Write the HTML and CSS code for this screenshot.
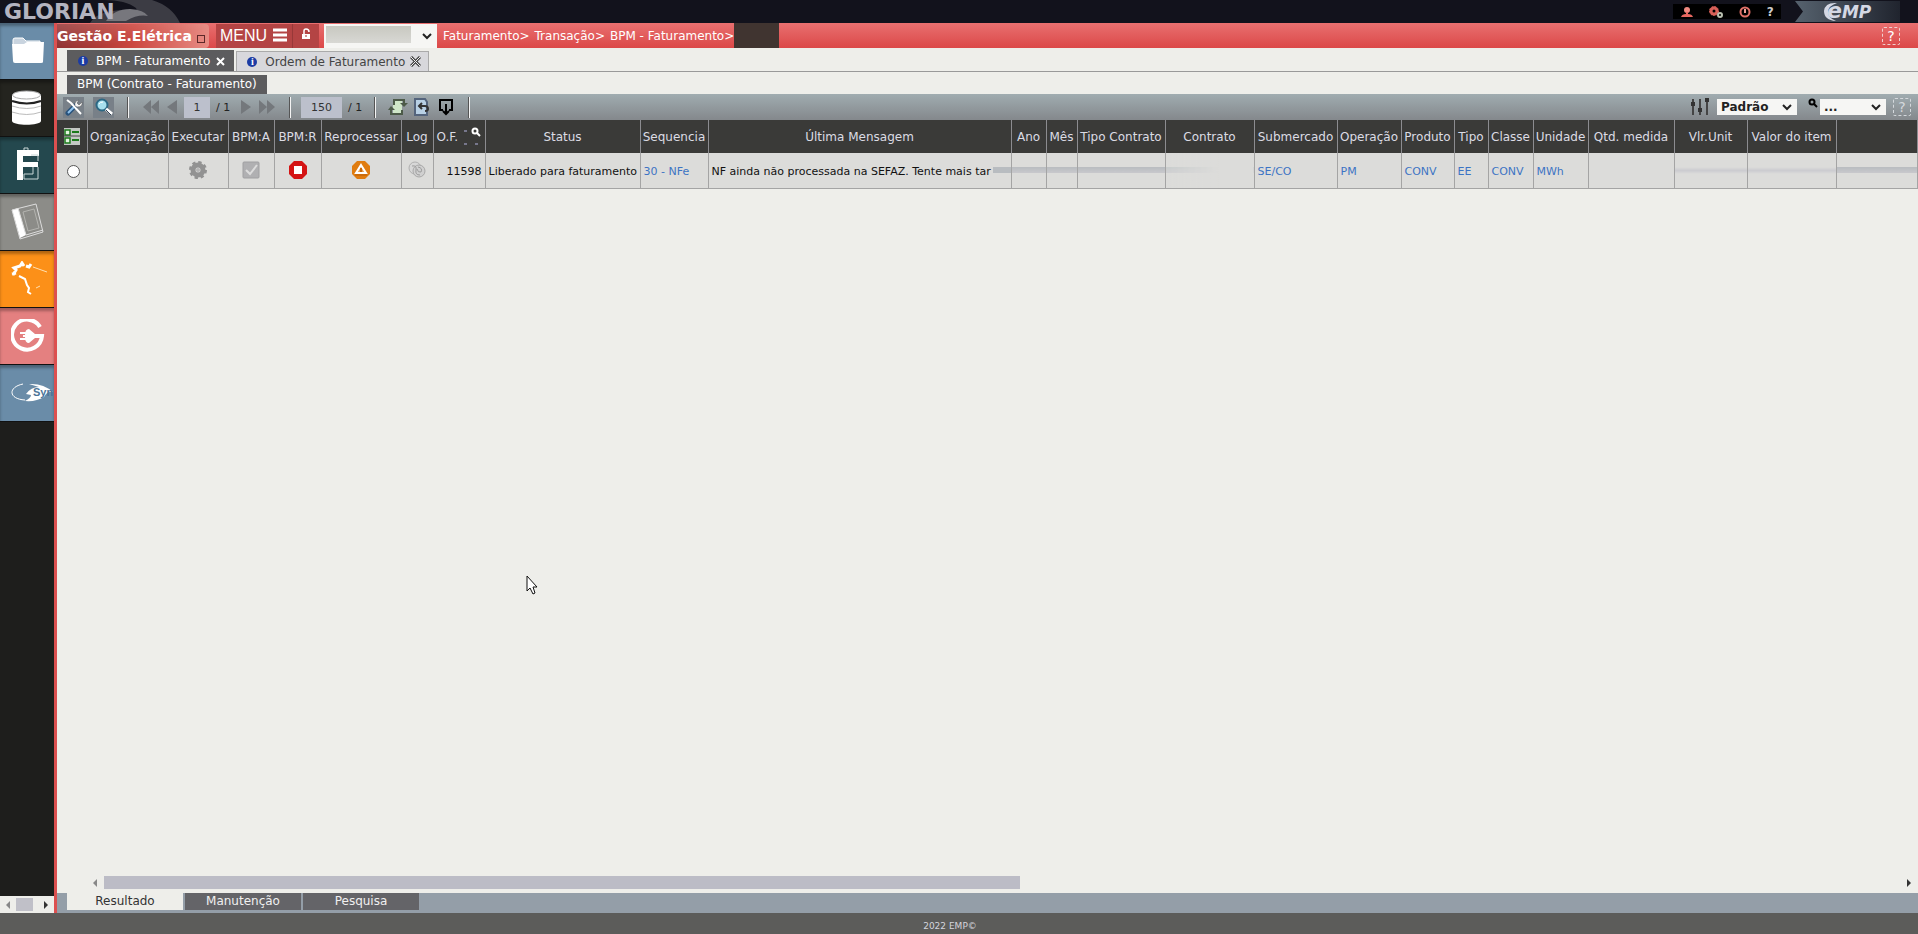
FILE: index.html
```html
<!DOCTYPE html>
<html lang="pt-BR">
<head>
  <meta charset="UTF-8">
  <meta name="viewport" content="width=device-width, initial-scale=1.0">
  <title>Glorian - BPM Faturamento</title>
  <link rel="stylesheet" href="styles.css">
</head>
<body>
  <header class="topbar">
    <svg class="topbar-swoosh" width="90" height="23" viewBox="0 0 90 23">
      <path d="M14 0H62Q82 6 90 23H0Q6 12 30 10Q50 14 46 8Q36 0 14 0Z" fill="#3c3c44"/>
      <path d="M16 21Q24 9 40 9Q54 10 58 16Q48 14 36 21Z" fill="#77777d"/>
    </svg>
    <span class="brand">GLORIAN</span>
    <nav class="user-icons">
      <a href="#" aria-label="Usuário"><svg width="14" height="12" viewBox="0 0 14 12"><circle cx="7" cy="4" r="3" fill="#f08a80"/><path d="M1 11Q2 8 6 8V6H8V8Q12 8 13 11Z" fill="#e86860"/></svg></a>
      <a href="#" aria-label="Configurações"><svg width="14" height="12" viewBox="0 0 14 12"><circle cx="5" cy="5" r="3" fill="none" stroke="#d86058" stroke-width="3"/><circle cx="5" cy="5" r="4.5" fill="none" stroke="#d86058" stroke-dasharray="2 1"/><circle cx="11" cy="9" r="2" fill="none" stroke="#b9c0b0" stroke-width="2"/></svg></a>
      <a href="#" aria-label="Sair"><svg width="14" height="12" viewBox="0 0 14 12"><circle cx="7" cy="6" r="4.5" fill="none" stroke="#e07068" stroke-width="2"/><path d="M7 3V7" stroke="#f0a098" stroke-width="2"/></svg></a>
      <a href="#" aria-label="Ajuda">?</a>
    </nav>
    <div class="company">
      <svg class="company-arc" width="20" height="20" viewBox="0 0 20 20"><path d="M15 1Q3 0 2 9Q2 18 14 19Q6 16 6 10Q6 4 15 1Z" fill="#d4d8e4"/></svg>
      <span class="company-e">e</span>MP
    </div>
  </header>

  <div class="layout">
    <aside class="sidebar">
      <a href="#" class="tile blue" aria-label="Pastas"><svg width="34" height="30" viewBox="0 0 34 30"><path d="M2 9V4Q2 2 4 2H12L15 5H29V9" fill="#c9d4df" stroke="#fff"/><path d="M1 8H13L16 6H33L32 26Q32 27 30 27H4Q2 27 2 25Z" fill="#fff"/></svg></a>
      <a href="#" class="tile black" aria-label="Banco de dados"><svg width="34" height="36" viewBox="0 0 34 36"><path d="M1 5V31C2 36 29 36 30 31V5Z" fill="#fff"/><ellipse cx="15.500" cy="5" rx="14" ry="4" fill="#fff" stroke="#aaa"/><path d="M1 11Q16 16 30 11" fill="none" stroke="#222" stroke-width="2"/><path d="M1 16Q16 21 30 16M1 22Q16 27 30 22" fill="none" stroke="#bbb"/></svg></a>
      <a href="#" class="tile teal" aria-label="Estrutura"><svg width="34" height="36" viewBox="0 0 34 36"><path d="M6 3H28V9H12V15H27V20H12V33H6Z" fill="#fff"/><path d="M13 3V1H17V3M20 8H27V14M27 20V32H13V27H22V20" fill="none" stroke="#c9d6d6"/></svg></a>
      <a href="#" class="tile gray" aria-label="Manual"><svg width="34" height="38" viewBox="0 0 34 38"><path d="M1 7L7 5L15 32L9 35Z" fill="#fff"/><path d="M1 7L25 1L32 29L9 36ZM7 5L15 32L32 27" fill="none" stroke="#ddd"/><path d="M12 9L23 6L28 25L17 28Z" fill="none" stroke="#b4b4b0"/></svg></a>
      <a href="#" class="tile orange" aria-label="Mapa"><svg width="36" height="36" viewBox="0 0 36 36"><path d="M2 14L5 9L3 7L9 5L11 2L13 5M15 5L18 6L20 3M1 13L5 12" fill="none" stroke="#fff" stroke-width="3"/><path d="M8 15L14 18L16 24L18 27L17 31L20 33" fill="none" stroke="#fff" stroke-width="2"/><path d="M22 6L36 11M25 27L29 25" fill="none" stroke="#ffe0b0"/></svg></a>
      <a href="#" class="tile pink" aria-label="Energia"><svg width="34" height="34" viewBox="0 0 34 34"><path d="M29 8A15 15 0 1 0 31 17H24" fill="none" stroke="#fff" stroke-width="4"/><path d="M12 16H14Q14 10 18 10L24 15V19L18 24Q14 24 14 18H12Z" fill="#fff"/><path d="M9 14H16M9 20H16" stroke="#fff" stroke-width="2"/></svg></a>
      <a href="#" class="tile blue sync" aria-label="Sync"><svg width="44" height="22" viewBox="0 0 44 22"><path d="M12 2C-3 5-3 17 14 18" fill="none" stroke="#fff"/><path d="M18 2Q32 1 42 10Q36 9 33 15Q25 20 14 19Q20 16 20 13L15 12Q20 5 28 5Z" fill="#fff"/></svg><span>Syn</span></a>
      <div class="side-scroll">
        <span class="arrow left dim"></span><span class="side-thumb"></span><span class="arrow right"></span>
      </div>
    </aside>

    <main class="content">
      <div class="module-bar">
        <div class="module">Gestão E.Elétrica <button type="button" class="restore" aria-label="Fechar módulo"></button></div>
        <button type="button" class="menu-btn">MENU
          <svg width="16" height="15" viewBox="0 0 16 15"><path d="M1 2H15M1 7H15M1 12H15" stroke="#fff" stroke-width="3"/></svg>
        </button>
        <button type="button" class="lock-btn" aria-label="Bloquear"><svg width="10" height="12" viewBox="0 0 10 12"><path d="M3 6V3Q3 1 5 1Q8 1 8 4" fill="none" stroke="#fff" stroke-width="1.5"/><path d="M1 6H9V11H1Z" fill="#fff"/><path d="M5 7V9" stroke="#a33"/></svg></button>
        <div class="select-box company-select">
          <select aria-label="Empresa"><option></option></select>
          <span class="masked"></span>
          <svg width="10" height="7" viewBox="0 0 10 7"><path d="M1 1L5 5L9 1" fill="none" stroke="#222" stroke-width="2"/></svg>
        </div>
        <nav class="breadcrumb"><a href="#">Faturamento&gt;</a> <a href="#">Transação&gt;</a> <a href="#">BPM - Faturamento&gt;</a></nav>
        <span class="crumb-end"></span>
        <button type="button" class="help">?</button>
      </div>

      <nav class="tabs">
        <a href="#" class="tab active"><i class="info">i</i>BPM - Faturamento <svg width="11" height="11" viewBox="0 0 11 11"><path d="M2 2L9 9M9 2L2 9" stroke="#fff" stroke-width="2"/></svg></a>
        <a href="#" class="tab"><i class="info">i</i>Ordem de Faturamento <svg width="11" height="11" viewBox="0 0 11 11"><path d="M1 1L10 10M10 1L1 10" stroke="#444" stroke-width="3"/><path d="M1 1L10 10M10 1L1 10" stroke="#eee"/></svg></a>
      </nav>
      <div class="subtabs"><a href="#" class="subtab">BPM (Contrato - Faturamento)</a></div>

      <div class="toolbar">
        <button type="button" class="tool boxed" aria-label="Ferramentas"><svg width="18" height="18" viewBox="0 0 18 18"><path d="M3 15L10 8" stroke="#28527c" stroke-width="5" stroke-linecap="round"/><path d="M3 15L9 9" stroke="#8fc2ec" stroke-width="2"/><path d="M2 2L6 5L16 16" fill="none" stroke="#fff" stroke-width="2"/><path d="M10 8Q9 3 14 2L12 5L14 7L17 4Q18 9 12 9Z" fill="#f4f4f4" stroke="#555" stroke-width=".5"/></svg></button>
        <button type="button" class="tool boxed" aria-label="Pesquisar"><svg width="20" height="18" viewBox="0 0 20 18"><circle cx="8" cy="7" r="5.500" fill="#a8e0ee" stroke="#2c6884" stroke-width="2"/><path d="M5 6Q6 4 9 4" stroke="#fff" fill="none"/><path d="M12 11L18 16" stroke="#fff" stroke-width="3"/><path d="M12 12L17 17" stroke="#345"/></svg></button>
        <span class="sep"></span>
        <div class="pager">
          <button type="button" class="nav" aria-label="Primeira"><svg width="18" height="16" viewBox="0 0 18 16"><path d="M9 1V15L1 8ZM17 1V15L9 8Z"/></svg></button>
          <button type="button" class="nav" aria-label="Anterior"><svg width="12" height="16" viewBox="0 0 12 16"><path d="M11 1V15L1 8Z"/></svg></button>
          <input class="page" type="text" value="1" aria-label="Página"><span class="total">/ 1</span>
          <button type="button" class="nav" aria-label="Próxima"><svg width="12" height="16" viewBox="0 0 12 16"><path d="M1 1V15L11 8Z"/></svg></button>
          <button type="button" class="nav" aria-label="Última"><svg width="18" height="16" viewBox="0 0 18 16"><path d="M1 1V15L9 8ZM9 1V15L17 8Z"/></svg></button>
        </div>
        <span class="sep"></span>
        <input class="rows" type="text" value="150" aria-label="Linhas"><span class="total">/ 1</span>
        <span class="sep"></span>
        <div class="actions">
          <button type="button" class="tool" aria-label="Atualizar"><svg width="20" height="18" viewBox="0 0 20 18"><path d="M5 2H14V16H5Z" fill="#cfe6c8"/><path d="M16 6V2H6V7M3 10V16H14V12" fill="none" stroke="#4c5a48" stroke-width="2"/><path d="M12 5L16 9L20 5ZM0 12L3 8L7 12Z" fill="#4c5a48"/></svg></button>
          <button type="button" class="tool" aria-label="Voltar"><svg width="18" height="18" viewBox="0 0 18 18"><path d="M2 1H12L14 4V17H2Z" fill="#b8d0e4" stroke="#54647c" stroke-width="2"/><path d="M6 8H12Q15 8 15 11Q15 13 12 13" fill="none" stroke="#333" stroke-width="2"/><path d="M9 5L6 8L9 11" fill="none" stroke="#333" stroke-width="2"/></svg></button>
          <button type="button" class="tool" aria-label="Exportar"><svg width="16" height="18" viewBox="0 0 16 18"><path d="M5 12H2V2H14V12H11M8 6V15M5 13L8 16L11 13" fill="none" stroke="#000" stroke-width="2"/></svg></button>
        </div>
        <span class="sep"></span>
        <div class="view-tools">
          <svg width="20" height="18" viewBox="0 0 20 18"><path d="M3 1V17M10 1V17M17 1V17" stroke="#444" stroke-width="2"/><path d="M1 6H5M8 12H12M15 2H19" stroke="#333" stroke-width="4"/></svg>
          <div class="select-box layout-select">
            <select aria-label="Layout"><option>Padrão</option></select>
            <svg width="10" height="7" viewBox="0 0 10 7"><path d="M1 1L5 5L9 1" fill="none" stroke="#222" stroke-width="2"/></svg>
          </div>
          <svg class="key" width="12" height="18" viewBox="0 0 12 18"><circle cx="5" cy="4" r="2.5" fill="none" stroke="#000" stroke-width="2"/><path d="M7 6L10 9" stroke="#000" stroke-width="2"/></svg>
          <div class="select-box filter-select">
            <select aria-label="Filtro"><option>...</option></select>
            <svg width="10" height="7" viewBox="0 0 10 7"><path d="M1 1L5 5L9 1" fill="none" stroke="#222" stroke-width="2"/></svg>
          </div>
          <button type="button" class="help">?</button>
        </div>
      </div>

      <table class="grid">
        <colgroup>
          <col class="w30"><col class="w81"><col class="w60"><col class="w46"><col class="w47"><col class="w80"><col class="w32"><col class="w52"><col class="w155"><col class="w68"><col class="w303"><col class="w35"><col class="w31"><col class="w88"><col class="w89"><col class="w83"><col class="w64"><col class="w53"><col class="w34"><col class="w45"><col class="w55"><col class="w86"><col class="w73"><col class="w89"><col>
        </colgroup>
        <thead>
          <tr>
            <th><svg width="16" height="17" viewBox="0 0 16 17"><path d="M0 0H16V17H0Z" fill="#c4c8c4"/><path d="M1 2H6V7H1ZM1 10H6V15H1Z" fill="#e4f4e0" stroke="#1c7a1c" stroke-width="1.5"/><path d="M8 4H15M8 12H15" stroke="#1c7a1c" stroke-width="2"/><path d="M0 8H16" stroke="#444"/></svg></th>
            <th>Organização</th>
            <th>Executar</th>
            <th>BPM:A</th>
            <th>BPM:R</th>
            <th>Reprocessar</th>
            <th>Log</th>
            <th class="of"><span>O.F.</span><svg width="17" height="22" viewBox="0 0 17 22"><circle cx="11" cy="5" r="2.5" fill="none" stroke="#fff" stroke-width="2"/><path d="M13 7L16 10" stroke="#fff" stroke-width="2"/><path d="M0 5H3M0 18H3M11 18H14" stroke="#77778c" stroke-width="2"/></svg></th>
            <th>Status</th>
            <th>Sequencia</th>
            <th>Última Mensagem</th>
            <th>Ano</th>
            <th>Mês</th>
            <th>Tipo Contrato</th>
            <th>Contrato</th>
            <th>Submercado</th>
            <th>Operação</th>
            <th>Produto</th>
            <th>Tipo</th>
            <th>Classe</th>
            <th>Unidade</th>
            <th>Qtd. medida</th>
            <th>Vlr.Unit</th>
            <th>Valor do item</th>
            <th></th>
          </tr>
        </thead>
        <tbody>
          <tr>
            <td class="icon select"><input type="radio" name="linha" aria-label="Selecionar linha"></td>
            <td></td>
            <td class="icon"><svg width="18" height="18" viewBox="0 0 18 18"><circle cx="9" cy="9" r="7" fill="none" stroke="#929292" stroke-width="4" stroke-dasharray="3 2.5"/><circle cx="9" cy="9" r="5" fill="none" stroke="#929292" stroke-width="5"/><circle cx="9" cy="9" r="2" fill="#b4b4b4"/></svg></td>
            <td class="icon"><svg width="18" height="18" viewBox="0 0 18 18"><rect x="1" y="1" width="16" height="16" rx="1" fill="#b0b0b2" stroke="#a0a0a2"/><path d="M4 9L8 13L15 4" fill="none" stroke="#dcdcdc" stroke-width="2"/></svg></td>
            <td class="icon"><svg width="18" height="18" viewBox="0 0 18 18"><path d="M5 0H13L18 5V13L13 18H5L0 13V5Z" fill="#d41414"/><path d="M5 5H13V13H5Z" fill="#fff"/></svg></td>
            <td class="icon"><svg width="18" height="18" viewBox="0 0 18 18"><path d="M5 0H13L18 5V13L13 18H5L0 13V5Z" fill="#e07c10"/><path d="M9 4L14 12H4Z" fill="#e8a050" stroke="#fff" stroke-width="2"/><path d="M9 7V11" stroke="#c86808" stroke-width="2"/><path d="M3 14H15" stroke="#b85c08"/></svg></td>
            <td class="icon"><svg width="18" height="18" viewBox="0 0 18 18"><circle cx="7" cy="7" r="6" fill="#d8d8d8" stroke="#b0b0b0"/><circle cx="11" cy="10" r="6" fill="#d0d0d0" stroke="#a8a8a8"/><path d="M4 5Q9 4 8 9T12 14M10 6Q15 7 13 11Q10 12 9 8" fill="none" stroke="#9c9c9c"/></svg></td>
            <td class="num">11598</td>
            <td>Liberado para faturamento</td>
            <td class="link">30 - NFe</td>
            <td class="message"><span>NF ainda não processada na SEFAZ. Tente mais tar</span><i class="smear"></i></td>
            <td class="smear-cell"></td>
            <td class="smear-cell"></td>
            <td class="smear-cell"></td>
            <td class="smear-cell fade-out"></td>
            <td class="link">SE/CO</td>
            <td class="link">PM</td>
            <td class="link">CONV</td>
            <td class="link">EE</td>
            <td class="link">CONV</td>
            <td class="link">MWh</td>
            <td></td>
            <td class="smear-cell light"></td>
            <td class="smear-cell light"></td>
            <td class="smear-cell"></td>
          </tr>
        </tbody>
      </table>

      <div class="workspace"></div>

      <div class="h-scroll">
        <span class="arrow left dim"></span>
        <div class="h-track"><div class="h-thumb"></div></div>
        <span class="arrow right"></span>
      </div>

      <nav class="bottom-tabs">
        <a href="#" class="active">Resultado</a>
        <a href="#">Manutenção</a>
        <a href="#">Pesquisa</a>
      </nav>
    </main>
  </div>

  <footer class="footer">2022 EMP©</footer>

  <svg class="pointer" width="13" height="20" viewBox="0 0 13 20"><path d="M1 1V16L4 13L7 19L9 18L7 12H11Z" fill="#fff" stroke="#111"/></svg>
</body>
</html>
```

FILE: styles.css
```css
* {
  box-sizing: border-box;
}

body {
  margin: 0;
  height: 100vh;
  display: flex;
  flex-direction: column;
  font-family: Verdana, "DejaVu Sans", sans-serif;
  font-size: 12px;
  color: #222;
  background-color: #eeeeea;
  overflow: hidden;
}

a {
  color: inherit;
  text-decoration: none;
}

button {
  border: none;
  background: none;
  padding: 0;
  font-family: inherit;
  color: inherit;
  cursor: pointer;
}

svg {
  flex: none;
}

/* top */
.topbar {
  position: relative;
  display: flex;
  align-items: center;
  height: 23px;
  flex: none;
  background-color: #12121c;
}

.topbar-swoosh {
  position: absolute;
  left: 90px;
  top: 0;
}

.brand {
  position: relative;
  padding-left: 4px;
  font-family: "DejaVu Sans", sans-serif;
  font-size: 22px;
  font-weight: bold;
  line-height: 23px;
  color: #b4b4c0;
}

.user-icons {
  display: flex;
  align-items: center;
  justify-content: space-around;
  width: 108px;
  height: 15px;
  margin-left: auto;
  margin-right: 14px;
  background-color: #000;
  color: #ccc;
  font-weight: bold;
}

.user-icons a {
  display: flex;
}

.company {
  position: relative;
  width: 105px;
  height: 21px;
  margin-right: 18px;
  padding-left: 32px;
  background: linear-gradient(90deg, #56626e, #20242e);
  clip-path: polygon(0 0, 100% 0, 100% 100%, 0 100%, 8px 50%);
  color: #d4d8e4;
  font-size: 17px;
  font-style: italic;
  font-weight: bold;
  line-height: 20px;
}

.company-arc {
  position: absolute;
  left: 27px;
  top: 1px;
}

.company-e {
  font-size: 22px;
}

/* left modules */
.layout {
  flex: 1;
  display: flex;
  min-height: 0;
}

.sidebar {
  display: flex;
  flex-direction: column;
  width: 57px;
  flex: none;
  border-right: 3px solid #dc5050;
  background-color: #1e1e1c;
}

.tile {
  display: flex;
  align-items: center;
  height: 57px;
  padding-left: 11px;
  border-bottom: 1px solid #111;
  box-shadow: inset 0 3px 3px rgba(0, 0, 0, 0.3);
  overflow: hidden;
}

.blue { background-color: #6a8ca8; }
.black { background-color: #24241f; }
.teal { background-color: #24484e; }
.gray { background-color: #8c8c88; }
.orange { background-color: #fc9018; }
.pink { background-color: #e48080; }

.sync {
  position: relative;
}

.sync span {
  position: absolute;
  left: 33px;
  top: 21px;
  font-family: "Liberation Sans", sans-serif;
  font-size: 11px;
  font-weight: bold;
  color: #4c7498;
}

.side-scroll {
  display: flex;
  align-items: center;
  justify-content: space-between;
  height: 17px;
  margin-top: auto;
  padding: 0 6px;
  background-color: #eeeeea;
}

.side-thumb {
  width: 17px;
  height: 13px;
  margin-right: 6px;
  background-color: #c0c0c8;
}

.arrow {
  width: 0;
  height: 0;
  border: 4px solid transparent;
}

.arrow.left {
  border-left-width: 0;
  border-right-color: #333;
}

.arrow.right {
  border-right-width: 0;
  border-left-color: #333;
}

.arrow.left.dim {
  border-right-color: #888;
}

/* content */
.content {
  flex: 1;
  display: flex;
  flex-direction: column;
  min-width: 0;
}

.module-bar {
  display: flex;
  align-items: center;
  height: 25px;
  flex: none;
  background: linear-gradient(#e87070, #dc4848);
  color: #fff;
}

.module {
  display: flex;
  align-items: center;
  justify-content: space-between;
  width: 152px;
  height: 24px;
  padding-right: 4px;
  border-radius: 0 4px 4px 0;
  background: linear-gradient(170deg, rgba(255, 255, 255, 0.2), transparent 60%), linear-gradient(90deg, #8c2828, #cc4840 50%, #e88c84);
  font-size: 14px;
  font-weight: bold;
  white-space: nowrap;
}

.restore {
  width: 8px;
  height: 8px;
  margin-top: 6px;
  border: 1px solid #5c2828;
}

.menu-btn {
  display: flex;
  align-items: center;
  justify-content: center;
  gap: 5px;
  width: 76px;
  height: 24px;
  margin-left: 7px;
  background-color: #b44444;
  font-family: "Liberation Sans", sans-serif;
  font-size: 16px;
}

.lock-btn {
  width: 27px;
  height: 24px;
  border-left: 1px solid #983838;
  background-color: #b44444;
}

.select-box {
  position: relative;
  display: flex;
}

.select-box select {
  width: 100%;
  border: none;
  border-radius: 0;
  appearance: none;
  background-color: #f6f6f4;
  padding: 0 4px;
  font-family: inherit;
  font-size: 12px;
  font-weight: bold;
  color: #222;
}

.select-box svg {
  position: absolute;
  right: 5px;
  top: 5px;
}

.company-select {
  width: 113px;
  height: 24px;
  margin-left: 5px;
}

.company-select svg {
  top: 9px;
}

.masked {
  position: absolute;
  left: 2px;
  top: 2px;
  width: 85px;
  height: 17px;
  background: linear-gradient(#c8c8c0, #d8d8d4);
}

.breadcrumb {
  display: flex;
  gap: 5px;
  padding-left: 6px;
}

.crumb-end {
  width: 45px;
  height: 25px;
  background-color: #403430;
}

.help {
  width: 18px;
  height: 18px;
  border: 1px dashed #f0d0d0;
  border-radius: 2px;
  font-size: 14px;
  line-height: 14px;
}

.module-bar .help {
  margin-left: auto;
  margin-right: 18px;
}

.tabs {
  display: flex;
  align-items: flex-end;
  gap: 2px;
  height: 24px;
  flex: none;
  padding-left: 10px;
  border-bottom: 1px solid #999;
}

.tab {
  display: flex;
  align-items: center;
  height: 20px;
  padding: 0 7px 0 10px;
  border: 1px solid #aaa;
  border-bottom: none;
  background-color: #d8d8dc;
  color: #444;
}

.tab.active {
  height: 21px;
  border-color: #5c5c5c;
  background-color: #5c5c5e;
  color: #fff;
}

.tab svg {
  margin-left: 5px;
}

.info {
  width: 10px;
  height: 10px;
  margin-right: 8px;
  border-radius: 50%;
  background-color: #1c3ca4;
  color: #fff;
  font-family: "Liberation Serif", serif;
  font-size: 10px;
  font-style: normal;
  font-weight: bold;
  line-height: 10px;
  text-align: center;
}

.subtabs {
  display: flex;
  padding: 3px 10px 0;
}

.subtab {
  height: 19px;
  padding: 0 10px;
  background-color: #5c5c5e;
  color: #fff;
  line-height: 19px;
}

/* toolbar */
.toolbar {
  display: flex;
  align-items: center;
  height: 26px;
  flex: none;
  padding: 0 7px 0 6px;
  background: linear-gradient(#a0acb0, #84888c);
}

.tool {
  display: flex;
  align-items: center;
  justify-content: center;
  width: 24px;
  height: 22px;
}

.boxed {
  width: 21px;
  height: 21px;
  margin-right: 9px;
  background-color: #788088;
}

.sep {
  width: 2px;
  height: 21px;
  border-left: 1px solid #555;
  border-right: 1px solid #f4f4f4;
}

.boxed + .sep {
  margin-left: 4px;
}

.pager {
  display: flex;
  align-items: center;
  width: 160px;
  padding-left: 13px;
}

.nav {
  display: flex;
  margin-right: 6px;
  fill: #74787c;
}

.page,
.rows {
  width: 26px;
  height: 21px;
  border: none;
  padding: 0;
  background-color: #bcc0cc;
  color: #333;
  font-family: inherit;
  font-size: 11px;
  text-align: center;
}

.rows {
  width: 41px;
  margin-left: 10px;
}

.total {
  width: 30px;
  padding-left: 6px;
  font-size: 11px;
  white-space: nowrap;
}

.rows + .total {
  width: 32px;
}

.actions {
  display: flex;
  width: 92px;
  padding-left: 10px;
}

.view-tools {
  display: flex;
  align-items: center;
  margin-left: auto;
}

.view-tools .select-box {
  height: 16px;
}

.layout-select {
  width: 80px;
  margin-left: 7px;
}

.key {
  margin-left: 10px;
}

.filter-select {
  width: 66px;
  margin-left: 1px;
}

.view-tools .help {
  margin-left: 7px;
  border-color: #d4d8dc;
  color: #d4d8dc;
}

/* grid */
.grid {
  width: 100%;
  flex: none;
  table-layout: fixed;
  border-collapse: collapse;
}

.w30 { width: 30px; }
.w31 { width: 31px; }
.w32 { width: 32px; }
.w34 { width: 34px; }
.w35 { width: 35px; }
.w45 { width: 45px; }
.w46 { width: 46px; }
.w47 { width: 47px; }
.w52 { width: 52px; }
.w53 { width: 53px; }
.w55 { width: 55px; }
.w60 { width: 60px; }
.w64 { width: 64px; }
.w68 { width: 68px; }
.w73 { width: 73px; }
.w80 { width: 80px; }
.w81 { width: 81px; }
.w83 { width: 83px; }
.w86 { width: 86px; }
.w88 { width: 88px; }
.w89 { width: 89px; }
.w155 { width: 155px; }
.w303 { width: 303px; }

.grid th {
  height: 33px;
  padding: 0;
  border-right: 1px solid #8c8c90;
  background-color: #3a3a38;
  color: #dcdce4;
  font-weight: normal;
  white-space: nowrap;
}

.grid th svg {
  vertical-align: middle;
}

.grid .of {
  padding-left: 3px;
  text-align: left;
}

.of svg {
  float: right;
  margin-right: 4px;
}

.of span {
  line-height: 22px;
}

.grid td {
  position: relative;
  height: 35px;
  padding: 2px 3px 0;
  border-right: 1px solid #a4a4a4;
  border-bottom: 1px solid #a4a4a4;
  background-color: #dcdcda;
  color: #111;
  font-size: 11px;
  white-space: nowrap;
}

.grid .icon {
  padding: 0;
  text-align: center;
}

.grid .select {
  padding: 2px 0 0 3px;
}

.icon svg {
  display: block;
  margin: 0 auto;
}

.icon input {
  display: block;
  width: 13px;
  height: 13px;
  margin: 0 auto;
  border: 1px solid #555;
  border-radius: 50%;
  appearance: none;
  background-color: #fff;
}

.grid .num {
  text-align: right;
}

.grid .link {
  color: #3c74c4;
}

.smear {
  position: absolute;
  right: 0;
  top: 14px;
  width: 18px;
  height: 6px;
  background-color: #b8bcc0;
}

.grid .smear-cell {
  background-image: linear-gradient(transparent 40%, #b8bcc0 40%, #c8c8cc 57%, transparent 57%);
}

.grid .light {
  background-image: linear-gradient(transparent 40%, #ccccd0 50%, transparent 60%);
}

.grid .fade-out {
  background-image: linear-gradient(90deg, transparent, #dcdcda 60%), linear-gradient(transparent 40%, #c8cccc 40%, #d0d0d2 57%, transparent 57%);
}

.workspace {
  flex: 1;
}

.h-scroll {
  display: flex;
  align-items: center;
  height: 13px;
  flex: none;
  margin-bottom: 4px;
  padding: 0 7px 0 36px;
}

.h-track {
  flex: 1;
  margin: 0 6px 0 7px;
}

.h-thumb {
  width: 51%;
  height: 13px;
  background-color: #bcbcc6;
}

.bottom-tabs {
  display: flex;
  gap: 2px;
  height: 20px;
  flex: none;
  padding: 0 10px 3px;
  background-color: #949ea8;
}

.bottom-tabs a {
  width: 116px;
  background-color: #646468;
  color: #f0f0f0;
  line-height: 17px;
  text-align: center;
}

.bottom-tabs .active {
  background-color: #eeeeea;
  color: #333;
}

.footer {
  height: 21px;
  flex: none;
  padding-right: 18px;
  background-color: #5c5c5a;
  color: #d4d4dc;
  font-size: 9px;
  line-height: 26px;
  text-align: center;
}

.pointer {
  position: absolute;
  left: 526px;
  top: 575px;
}
```
